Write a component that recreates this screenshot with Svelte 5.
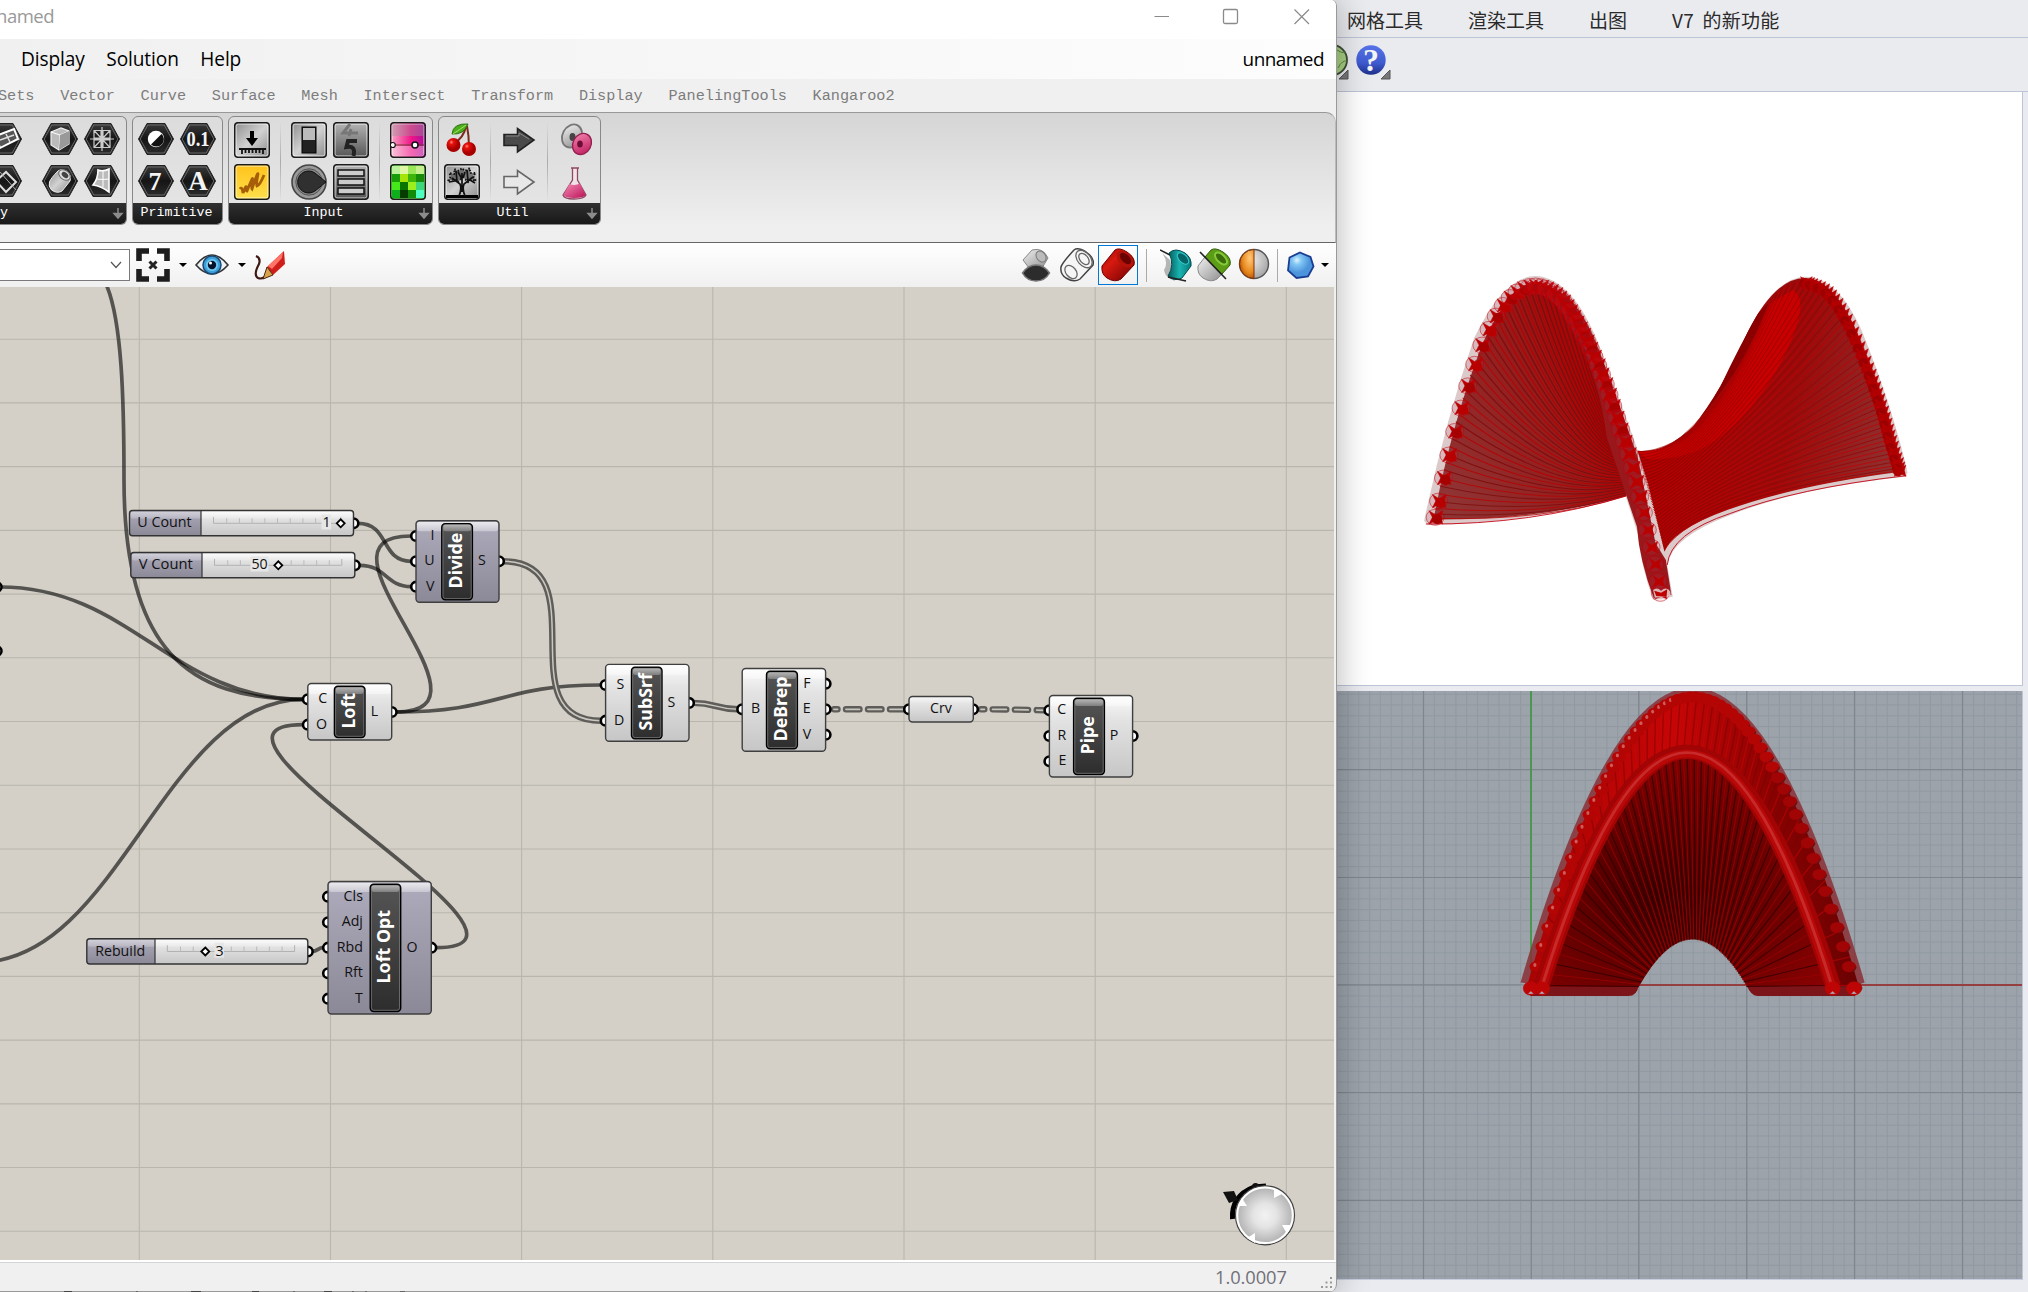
<script>
  const tabs = ['Sets', 'Vector', 'Curve', 'Surface', 'Mesh', 'Intersect', 'Transform', 'Display', 'PanelingTools', 'Kangaroo2'];
  // The first group is cut by the window edge: only its last columns show.
  const groups = [
    { label: 'y', arrow: true, cls: 'geometry', sets: [[['plane'], ['field']], [['box', 'mesh'], ['brep', 'surface']]] },
    { label: 'Primitive', arrow: false, cls: 'primitive', sets: [[['bool', 'num'], ['int', 'text']]] },
    { label: 'Input', arrow: true, cls: 'input', sets: [[['import'], ['panel']], [['toggle', 'digits'], ['knob', 'list']], [['gradient'], ['swatch']]] },
    { label: 'Util', arrow: true, cls: 'util', sets: [[['cherry'], ['tree']], [['arrowD'], ['arrowL']], [['discs'], ['flask']]] }
  ];

  const vLines = [139.3, 330.5, 521.6, 712.8, 904, 1095.2, 1286.3];
  const hLines = Array.from({ length: 15 }, (_, i) => 339.2 + i * 63.72);

  const sliders = [
    { name: 'U Count', x: 129.5, y: 510.5, w: 224, split: 201, tx: 137.3, tw: 54.4, by: 526.7, track: 213.5, knob: 340.7, val: '1', vx: 322.5 },
    { name: 'V Count', x: 130.8, y: 552.5, w: 224, split: 202, tx: 138.7, tw: 54, by: 569, track: 214.5, knob: 278.3, val: '50', vx: 251.5 },
    { name: 'Rebuild', x: 86.8, y: 938.7, w: 221, split: 155, tx: 95.2, tw: 50, by: 955.5, track: 167.3, knob: 205.3, val: '3', vx: 215.5 }
  ];
  const nodes = [
    { name: 'Divide', x: 416, y: 520.8, r: 499, b: 602.3, bx: 441.8, br: 472.4, mauve: true, ins: [['I', 536], ['U', 561.3], ['V', 586.7]], outs: [['S', 561.3, 482]] },
    { name: 'Loft', x: 307.8, y: 683.5, r: 391.7, b: 740, bx: 334.4, br: 365, ins: [['C', 699.3], ['O', 724.7]], outs: [['L', 712, 374.5]] },
    { name: 'SubSrf', x: 605.6, y: 664.4, r: 689, b: 741.3, bx: 631.5, br: 662, ins: [['S', 685], ['D', 720.7]], outs: [['S', 702.9, 671.4]] },
    { name: 'DeBrep', x: 742.2, y: 668.5, r: 825.6, b: 751.3, bx: 766.5, br: 797.4, ins: [['B', 709.3]], outs: [['F', 683.7, 806.8], ['E', 709.3, 806.8], ['V', 734.7, 807]] },
    { name: 'Pipe', x: 1049.4, y: 695.5, r: 1132.6, b: 777, bx: 1073.6, br: 1104.4, ins: [['C', 710.3], ['R', 736], ['E', 761.3]], outs: [['P', 736, 1114]] },
    { name: 'Loft Opt', x: 328, y: 881.5, r: 431.3, b: 1014, bx: 370.2, br: 400.7, mauve: true, ins: [['Cls', 896.7], ['Adj', 922.3], ['Rbd', 947.7], ['Rft', 973.3], ['T', 998.7]], outs: [['O', 947.7, 412]] }
  ];
  const wires = [
    'M106 284C122 320 124 400 124 480C124 650 188 699.3 303 699.3',
    'M0 587C130 587 173 699.3 303 699.3',
    'M-20 962C118 962 165 699.3 303 699.3',
    'M358 523.3C390 523.3 380 561.3 411 561.3',
    'M360 565.3C386 565.3 386 586.7 411 586.7',
    'M396 712C510 712 298 536 411 536',
    'M396 712C500 712 500 685 601 685',
    'M436 947.7C581 947.7 158 724.7 303 724.7',
    'M312 951.3C318 951.3 318 947.7 323 947.7'
  ];
  const doubles = ['M503 561.3C600 561.3 505 720.7 601 720.7', 'M693 702.9C716 702.9 716 709.3 738 709.3'];

  const lerp = (a, b, t) => a + (b - a) * t;
  function along(pts, t) {
    const n = pts.length - 1;
    const s = Math.min(n - 1, Math.floor(t * n));
    const f = t * n - s;
    const p0 = pts[Math.max(0, s - 1)], p1 = pts[s], p2 = pts[s + 1], p3 = pts[Math.min(n, s + 2)];
    return [0, 1].map((k) => 0.5 * (2 * p1[k] + (p2[k] - p0[k]) * f + (2 * p0[k] - 5 * p1[k] + 4 * p2[k] - p3[k]) * f * f + (3 * p1[k] - p0[k] - 3 * p2[k] + p3[k]) * f ** 3));
  }
  const edgeLeft = [[102, 802], [136, 640], [184, 450], [244, 270], [313, 150], [390, 108], [465, 145], [530, 250], [588, 380], [633, 515], [672, 640], [703, 770], [733, 910], [756, 1030]];
  const edgeRight = [[1055, 190], [1110, 115], [1180, 97], [1243, 128], [1300, 215], [1355, 345], [1395, 460], [1425, 570], [1452, 662]];
  const leftRim = [[500, 160], [440, 125], [380, 115], [310, 160], [240, 280], [180, 450], [132, 640], [98, 805]];
  const leftFan = Array.from({ length: 56 }, (_, i) => {
    const t = i / 55;
    const [x, y] = along(leftRim, t);
    return { t, d: `M${x} ${y}Q${lerp(560, 420, t)} ${lerp(430, 815, t)} ${lerp(625, 657, t)} ${lerp(560, 738, t)}` };
  });
  const rightFan = Array.from({ length: 64 }, (_, i) => {
    const t = i / 63;
    const [x, y] = along(edgeRight, t);
    return { t, d: `M${x} ${y}Q${lerp(900, 860, t)} ${lerp(600, 745, t)} ${lerp(690, 768, t)} ${lerp(605, 900, t)}` };
  });
  // Pipe ends sit closer together at the crown than at the feet.
  const leftBeads = Array.from({ length: 50 }, (_, i) => {
    const s = i / 49;
    return along(edgeLeft, Math.min(1, s + 0.07 * Math.sin(2 * Math.PI * s)));
  });
  const rightBeads = Array.from({ length: 38 }, (_, i) => along(edgeRight.slice(2), i / 37));

  const para = (c, h, top, base, u) => [c + h * u, top + (base - top) * u * u];
  const arch = Array.from({ length: 81 }, (_, i) => {
    const u = -1 + (2 * i) / 80;
    return { u, a: para(815, 372, 60, 795, u), b: para(802, 325, 215, 795, u), c: para(814, 121, 680, 798, u) };
  });
  const beads = Array.from({ length: 56 }, (_, i) => para(815, 364, 68, 800, -1 + (2 * i) / 55));
  const minorX = Array.from({ length: 64 }, (_, i) => 1337.25 + i * 10.785);
  const minorY = Array.from({ length: 55 }, (_, i) => 694.2 + i * 10.775);
  const star = (x, y, r) => `M${x - r} ${y - r}L${x} ${y - r * 0.35} ${x + r} ${y - r} ${x + r * 0.7} ${y} ${x + r} ${y + r} ${x} ${y + r * 0.5} ${x - r} ${y + r} ${x - r * 0.5} ${y}Z`;
</script>

{#snippet hex()}
  <path d="M9 1.5H27L35.5 17 27 32.5H9L.5 17Z" fill="url(#hexFill)" stroke="#222" />
  <path d="M9.8 3H26.2L33.8 17 26.2 31H9.8L2.2 17Z" fill="none" stroke="#777" stroke-width=".8" />
{/snippet}
{#snippet tile(fill)}
  <rect x=".7" y=".7" width="34.6" height="34.6" rx="3" {fill} stroke="#1c1c1c" stroke-width="1.5" />
  <rect x="2.2" y="2.2" width="31.6" height="31.6" rx="2" fill="none" stroke="#fff" stroke-opacity=".55" />
{/snippet}

{#snippet icon(name)}
  <svg class="ico" viewBox="0 0 36 36">
    {#if ['plane', 'field', 'box', 'mesh', 'brep', 'surface', 'bool', 'num', 'int', 'text'].includes(name)}{@render hex()}{/if}
    {#if name === 'plane'}
      <path d="M10 14L28 7 32 17 14 26Z" fill="#555" stroke="#fff" stroke-width="2" /><path d="M20 12L24 20M14 18L28 13" stroke="#ddd" stroke-width="1.5" />
    {:else if name === 'field'}
      <path d="M10 17L20 8 30 18 20 28Z" fill="none" stroke="#ddd" stroke-width="2" /><path d="M14 8L30 26" stroke="#aaa" />
    {:else if name === 'box'}
      <path d="M9 10L19 6 27 9V22L17 28 9 23Z" fill="#bbb" stroke="#eee" stroke-width="1.2" /><path d="M9 10L18 13 27 9M18 13L17 28" fill="none" stroke="#fff" /><path d="M18 13L27 9V22L17 28Z" fill="#999" />
    {:else if name === 'mesh'}
      <path d="M10 8.5H17V16H10ZM19 8.500H26V16H19ZM10 18H17V25.500H10ZM19 18H26V25.500H19ZM10 8.500L26 25.500M26 8.500L10 25.500M18 5V29M6 17H30" fill="none" stroke="#ccc" stroke-width="1.2" />
    {:else if name === 'brep'}
      <path d="M7.5 18Q9 14 16 7Q20 4 26 8Q30 12 28 17L20 27Q15 30 9.500 26Q6 22 7.500 18Z" fill="url(#metal)" stroke="#eee" /><ellipse cx="22.500" cy="11" rx="6.500" ry="4.500" transform="rotate(38 22.500 11)" fill="#ddd" stroke="#666" /><ellipse cx="23" cy="11" rx="3.800" ry="2.400" transform="rotate(38 23 11)" fill="#444" />
    {:else if name === 'surface'}
      <path d="M14 6Q19 8 25 5V28Q17 22 9 21Q14 15 14 6Z" fill="#bbb" stroke="#fff" stroke-width="1.6" /><path d="M19 7V23M12 15Q20 16 25 15" fill="none" stroke="#fff" />
    {:else if name === 'bool'}
      <circle cx="18" cy="17" r="8.2" fill="#fff" /><path d="M23.500 12A7.500 7 0 0 1 13 22.500Z" fill="#111" />
    {:else if name === 'num'}
      <text x="18" y="24" class="serif bold" font-size="20" textLength="23" lengthAdjust="spacingAndGlyphs">0.1</text>
    {:else if name === 'int'}
      <text x="17" y="26" class="serif bold" font-size="26">7</text>
    {:else if name === 'text'}
      <text x="18" y="26" class="serif bold" font-size="27">A</text>
    {:else if name === 'import'}
      {@render tile('url(#metal)')}<path d="M16 9H20V16H24L18 24 12 16H16Z" fill="#000" /><path d="M5 27H32M8 27V32M11.5 27V31M15 27V31M18.5 27V31M22 27V31M25.5 27V31M29 27V32" stroke="#111" stroke-width="1.8" />
    {:else if name === 'panel'}
      {@render tile('url(#gold)')}<path d="M6 25Q8 22 9 29Q12 21 12.500 23Q12 27 13 27Q19 12 18.500 15Q17 24 18 25Q24 7 24 10Q22 20 23 22Q26 21 30 11" fill="none" stroke="#a65f08" stroke-width="2.800" />
    {:else if name === 'toggle'}
      {@render tile('url(#metal)')}<rect x="11" y="5" width="14" height="26" fill="#222" stroke="#000" /><rect x="12" y="6" width="12" height="12" fill="#bbb" />
    {:else if name === 'digits'}
      {@render tile('url(#metalDark)')}<path d="M17 2L10 11H25M18 7L16 14" stroke="#777" stroke-width="3" fill="none" /><path d="M24 19H15L13.500 25Q23 23 20.500 34" stroke="#222" stroke-width="4" fill="none" />
    {:else if name === 'knob'}
      <circle cx="18" cy="18" r="17" fill="#999" stroke="#444" stroke-width="1.6" /><circle cx="18" cy="18" r="13.2" fill="#888" stroke="#555" /><path d="M18 7A11 11 0 1 0 24 27L35 18 24 9Q21 7 18 7Z" fill="#303030" stroke="#111" />
    {:else if name === 'list'}
      {@render tile('url(#metalDark)')}<path d="M5 6H31V12H5ZM5 15H31V21H5ZM5 24H31V30H5Z" fill="#ccc" stroke="#111" stroke-width="1.5" />
    {:else if name === 'gradient'}
      {@render tile('url(#pink)')}<path d="M2 2H34V14H2Z" fill="#999" opacity=".4" /><path d="M2 23H34" stroke="#733" stroke-width="1" /><path d="M2 24H34V31Q34 33 31 33H4Q2 33 2 31Z" fill="#fff" opacity=".35" /><circle cx="2.8" cy="23" r="2.5" fill="#fff" stroke="#111" stroke-width="1.2" /><circle cx="25" cy="23" r="3" fill="#fff" stroke="#111" stroke-width="1.5" />
    {:else if name === 'swatch'}
      {@render tile('#3bd31e')}
      <path d="M2 2H10V10H2Z" fill="#bdf29c" /><path d="M10 2H18V10H10Z" fill="#dff7a5" /><path d="M18 2H26V10H18Z" fill="#9ae85a" /><path d="M26 2H34V10H26Z" fill="#c4f08e" /><path d="M2 10H10V18H2Z" fill="#189c08" /><path d="M10 10H18V18H10Z" fill="#a5e408" /><path d="M18 10H26V18H18Z" fill="#3db50b" /><path d="M26 10H34V18H26Z" fill="#188c08" /><path d="M2 18H10V26H2Z" fill="#45e818" /><path d="M10 18H18V26H10Z" fill="#0a7500" /><path d="M18 18H26V26H18Z" fill="#9aef1c" /><path d="M26 18H34V26H26Z" fill="#3dd67b" /><path d="M2 26H10V34H2Z" fill="#0fae1c" /><path d="M10 26H18V34H10Z" fill="#063c00" /><path d="M18 26H26V34H18Z" fill="#128b08" /><path d="M26 26H34V34H26Z" fill="#4dffc0" />
    {:else if name === 'cherry'}
      <path d="M22 4Q20 16 9 22M23 4Q25 14 25 25" fill="none" stroke="#7d2b1d" stroke-width="2" /><path d="M8 12Q9 1 24 2Q20 13 8 12Z" fill="#4cae1c" stroke="#2c7010" /><path d="M9 12Q15 8 22 3" stroke="#a9e36a" fill="none" /><circle cx="9.5" cy="23" r="7" fill="url(#cherry)" /><circle cx="25" cy="27" r="7" fill="url(#cherry)" />
    {:else if name === 'tree'}
      {@render tile('url(#metal)')}<path d="M2 31H34V34H2Z" fill="#000" /><path d="M15 32Q18 25 16 20L8 14M21 32Q18 25 20 20L29 13M18 28V9M11 17L5 18M13 17L12 7M24 17L23 6M26 16L31 19M18 15L14 8M19 14L21 8" fill="none" stroke="#111" stroke-width="1.7" /><path d="M4 17L7 12 5 9 11 10 10 5 15 7 18 4 21 7 26 4 26 9 32 9 29 12 32 17 27 15 24 18 19 13 14 18 10 15Z" fill="#111" fill-opacity=".45" stroke="#111" stroke-dasharray="1.500 2" stroke-width="2" />
    {:else if name === 'arrowD'}
      <path d="M3 12.5H16.5V6.5L33 18 16.5 30V23.500H3Z" fill="#4a4a4a" stroke="#222" stroke-width="1.6" /><path d="M5 14H18V11L28 17" fill="none" stroke="#888" />
    {:else if name === 'arrowL'}
      <path d="M3 12.5H16.5V6.5L33 18 16.5 30V23.500H3Z" fill="#e8e8e8" stroke="#666" stroke-width="1.6" />
    {:else if name === 'discs'}
      <ellipse cx="14" cy="14" rx="9.500" ry="12" transform="rotate(28 14 14)" fill="url(#silver)" stroke="#777" stroke-width="1.800" /><ellipse cx="14.500" cy="15" rx="3" ry="4" fill="#444" /><ellipse cx="24" cy="22" rx="9" ry="11" transform="rotate(28 24 22)" fill="url(#rose)" stroke="#95204f" stroke-width="1.4" /><ellipse cx="22" cy="22" rx="2.800" ry="3.600" fill="#6b0d35" />
    {:else if name === 'flask'}
      <path d="M13 4H21M14.500 4V16L5 31Q6 35 16 35 26 35 28 31L19.500 16V4" fill="#f2e3e8" stroke="#8e4962" stroke-width="1.300" /><path d="M11.500 20Q17 22 22 19.500L27.500 31Q26 34 16 34 7 34 5.500 31Z" fill="url(#rose)" />
    {/if}
  </svg>
{/snippet}

<svg class="defs" width="0" height="0">
  <defs>
    <linearGradient id="hexFill" x1="0" y1="0" x2="0" y2="1"><stop offset="0" stop-color="#3a3a3a" /><stop offset=".5" stop-color="#151515" /><stop offset="1" stop-color="#2c2c2c" /></linearGradient>
    <linearGradient id="metal" x1="0" y1="0" x2="1" y2="1"><stop offset="0" stop-color="#8d8d8d" /><stop offset=".5" stop-color="#d2d2d2" /><stop offset="1" stop-color="#8a8a8a" /></linearGradient>
    <linearGradient id="silver" x1="0" y1="0" x2="1" y2="1"><stop offset="0" stop-color="#f2f2f2" /><stop offset="1" stop-color="#8f8f8f" /></linearGradient>
    <linearGradient id="metalDark" x1="0" y1="0" x2="0" y2="1"><stop offset="0" stop-color="#b5b5b5" /><stop offset="1" stop-color="#555" /></linearGradient>
    <linearGradient id="gold" x1="0" y1="0" x2="0" y2="1"><stop offset="0" stop-color="#ffc21a" /><stop offset="1" stop-color="#ffe04d" /></linearGradient>
    <linearGradient id="pink" x1="0" y1="0" x2="1" y2="0"><stop offset="0" stop-color="#f7a7c4" /><stop offset=".6" stop-color="#f01488" /><stop offset="1" stop-color="#a8109a" /></linearGradient>
    <radialGradient id="cherry" cx=".35" cy=".3"><stop offset="0" stop-color="#ff8d80" /><stop offset=".3" stop-color="#e8120e" /><stop offset="1" stop-color="#a80000" /></radialGradient>
    <linearGradient id="rose" x1="0" y1="0" x2="1" y2="1"><stop offset="0" stop-color="#f78bb5" /><stop offset="1" stop-color="#b91357" /></linearGradient>
    <linearGradient id="nodeGrey" x1="0" y1="0" x2="0" y2="1"><stop offset="0" stop-color="#fafafa" /><stop offset=".28" stop-color="#e4e4e4" /><stop offset="1" stop-color="#c6c6c6" /></linearGradient>
    <linearGradient id="nodeMauve" x1="0" y1="0" x2="0" y2="1"><stop offset="0" stop-color="#aeacbc" /><stop offset="1" stop-color="#8b8897" /></linearGradient>
    <linearGradient id="nodeDark" x1="0" y1="0" x2="0" y2="1"><stop offset="0" stop-color="#555" /><stop offset="1" stop-color="#2d2d2d" /></linearGradient>
    <linearGradient id="shine" x1="0" y1="0" x2="0" y2="1"><stop offset="0" stop-color="#fff" stop-opacity=".75" /><stop offset="1" stop-color="#fff" stop-opacity=".35" /></linearGradient>
    <radialGradient id="ball"><stop offset="0" stop-color="#f2f2f2" /><stop offset=".4" stop-color="#e4e4e4" /><stop offset="1" stop-color="#adadad" /></radialGradient>
    <linearGradient id="redCyl" x1="0" y1="0" x2="1" y2="1"><stop offset="0" stop-color="#8e0000" /><stop offset=".35" stop-color="#d81a10" /><stop offset="1" stop-color="#6c0000" /></linearGradient>
    <linearGradient id="tealCyl" x1="0" y1="0" x2="1" y2="0"><stop offset="0" stop-color="#06595a" /><stop offset=".5" stop-color="#19b4b1" /><stop offset="1" stop-color="#067a7c" /></linearGradient>
    <linearGradient id="helpBlue" x1="0" y1="0" x2="0" y2="1"><stop offset="0" stop-color="#5673ea" /><stop offset=".6" stop-color="#3f5bd0" /><stop offset="1" stop-color="#1c2f8a" /></linearGradient>
    <radialGradient id="gem" cx=".35" cy=".3"><stop offset="0" stop-color="#dff3ff" /><stop offset=".35" stop-color="#83c8f4" /><stop offset="1" stop-color="#4c94db" /></radialGradient>
    <radialGradient id="orb" cx=".7" cy=".3" r=".9"><stop offset="0" stop-color="#ffc87a" /><stop offset=".55" stop-color="#e8891c" /><stop offset="1" stop-color="#8e2f04" /></radialGradient>
    <radialGradient id="orbGrey" cx=".35" cy=".35" r=".7"><stop offset="0" stop-color="#f4f4f4" /><stop offset="1" stop-color="#a5a5a5" /></radialGradient>
    <linearGradient id="band" x1="0" y1="0" x2="1" y2="0"><stop offset="0" stop-color="#a80404" /><stop offset=".45" stop-color="#c60606" /><stop offset=".75" stop-color="#860202" /><stop offset="1" stop-color="#6a0202" /></linearGradient>
    <radialGradient id="inner" cx=".4" cy=".6" r=".7"><stop offset="0" stop-color="#3d0000" /><stop offset=".35" stop-color="#5c0000" /><stop offset="1" stop-color="#8a0202" /></radialGradient>
    <linearGradient id="fanL" x1="0" y1=".8" x2="1" y2=".2"><stop offset="0" stop-color="#8f3434" /><stop offset="1" stop-color="#9a0505" /></linearGradient>
    <linearGradient id="fanR" x1="0" y1=".3" x2="1" y2=".5"><stop offset="0" stop-color="#a80000" /><stop offset=".6" stop-color="#980c0c" /><stop offset="1" stop-color="#8f3030" /></linearGradient>
  </defs>
</svg>

<div class="screen">
  <main class="window">
    <header class="title">
      <span class="caption">named</span>
      <svg width="180" height="34" viewBox="0 0 180 34"><path d="M4.500 16.500H19M144.500 9.500L159 24M159 9.500L144.500 24" stroke="#8a8a8a" stroke-width="1.200" /><rect x="73.500" y="9.500" width="14" height="14" rx="1.500" fill="none" stroke="#8a8a8a" stroke-width="1.300" /></svg>
    </header>
    <nav class="menu"><span>Display</span><span>Solution</span><span>Help</span><span class="doc">unnamed</span></nav>
    <nav class="tabs">{#each tabs as t}<span>{t}</span>{/each}</nav>
    <section class="ribbon">
      {#each groups as g}
        <div class="group {g.cls}">
          <div class="sets">
            {#each g.sets as set, i}
              {#if i}<i class="rule"></i>{/if}
              <div class="set">{#each set as row}<div class="row">{#each row as n}{@render icon(n)}{/each}</div>{/each}</div>
            {/each}
          </div>
          <div class="label"><span>{g.label}</span>{#if g.arrow}<svg width="12" height="14" viewBox="0 0 12 14"><path d="M6 1V7M2 6.500L6 11 10 6.500Z" fill="#8c8c8c" stroke="#8c8c8c" stroke-width="1.500" /></svg>{/if}</div>
        </div>
      {/each}
    </section>
    <section class="toolbar">
      <div class="combo"><svg width="14" height="10" viewBox="0 0 14 10"><path d="M2 2L7 7.500 12 2" fill="none" stroke="#555" stroke-width="1.200" /></svg></div>
      <svg class="t1" width="34" height="34" viewBox="0 0 34 34"><path d="M3 13V3H13M21 3H31V13M31 21V31H21M13 31H3V21" fill="none" stroke="#1d1d1d" stroke-width="5.600" /><path d="M13.500 13.500L20.500 20.500M20.500 13.500L13.500 20.500" stroke="#222" stroke-width="3" /></svg>
      <i class="caret c1"></i>
      <svg class="t2" width="34" height="24" viewBox="0 0 34 24"><path d="M1 12Q17-8 33 12Q17 30 1 12Z" fill="#eef2f4" stroke="#333" stroke-width="1.600" /><circle cx="17" cy="12" r="9" fill="#3f9fd8" stroke="#174a77" stroke-width="1.500" /><circle cx="17" cy="12" r="6" fill="#6ecbf5" /><circle cx="17" cy="12" r="4.200" fill="#06122b" /><circle cx="15.500" cy="10" r="1.500" fill="#fff" /></svg>
      <i class="caret c2"></i>
      <svg class="t3" width="34" height="32" viewBox="0 0 34 32"><path d="M3 7Q8 9 6 15Q0 26 5 29Q10 31 15 25" fill="none" stroke="#3f1914" stroke-width="2.200" /><path d="M14 18L31 2 32 15 20 26Z" fill="#cf1f1a" /><path d="M15 17L30 3 29 9 19 20Z" fill="#ff7468" /><path d="M14 18L20 26 10 30Z" fill="#d9a44c" stroke="#4b2a10" /></svg>
      <div class="right">
        <svg width="30" height="34" viewBox="0 0 30 34"><path d="M2 12L11 2Q22-1 27 10L21 20H8Z" fill="url(#silver)" stroke="#888" /><ellipse cx="20" cy="8.500" rx="4.500" ry="6" transform="rotate(-35 20 8.500)" fill="#bbb" stroke="#777" /><path d="M1.500 25Q7 17 15 17T28.500 25Q24 33 15 33T1.500 25Z" fill="#2c2c2c" stroke="#777" stroke-width="1.500" /></svg>
        <svg class="wireCyl" width="34" height="34" viewBox="0 0 34 34"><path d="M1 19Q2 15 14 2Q18-1 26 4Q35 10 33 17L20 31Q14 35 6 30Q0 26 1 19Z" fill="#f6f6f6" stroke="#444" stroke-width="1.500" /><g fill="none" stroke="#666" stroke-width="1.300"><ellipse cx="24" cy="11" rx="6.500" ry="10" transform="rotate(-40 24 11)" /><ellipse cx="24" cy="11" rx="4" ry="6.500" transform="rotate(-40 24 11)" /><ellipse cx="11" cy="24" rx="5" ry="7.500" transform="rotate(-40 11 24)" /></g></svg>
        <div class="active"><svg width="34" height="34" viewBox="0 0 34 34"><path d="M1 18L14 2Q18-1 26 4Q35 10 33 17L20 31Q14 35 6 30Q0 26 1 18Z" fill="url(#redCyl)" stroke="#6d0000" /><ellipse cx="24" cy="11" rx="6.500" ry="10" transform="rotate(-45 24 11)" fill="#b5120a" /><ellipse cx="24.500" cy="10.500" rx="4" ry="7" transform="rotate(-45 24.500 10.500)" fill="#6a0300" /></svg></div>
        <i class="sep"></i>
        <svg class="teal" width="32" height="34" viewBox="0 0 32 34"><path d="M2 5Q9 14 4 22Q5 30 15 33L10 12Z" fill="#888" opacity=".6" /><path d="M9 5Q15-1 25 5Q32 10 31 18L22 30Q14 34 8 28Q15 17 9 5Z" fill="url(#tealCyl)" stroke="#044b4d" /><ellipse cx="23" cy="10.500" rx="4" ry="7" transform="rotate(-45 23 10.500)" fill="#066468" stroke="#35c6c6" /><path d="M0 2L10 7M8 29L26 33" stroke="#222" stroke-width="1.500" /></svg>
        <svg class="green" width="34" height="34" viewBox="0 0 34 34"><path d="M1 18L8 9 25 26 20 31Q14 35 6 30Q0 26 1 18Z" fill="url(#silver)" stroke="#888" /><path d="M8 9L14 2Q18-1 26 4Q35 10 33 17L25 26Z" fill="#5c9c16" stroke="#2f5d08" /><ellipse cx="24" cy="10.500" rx="4" ry="7.500" transform="rotate(-45 24 10.500)" fill="#3c6b0c" stroke="#84c93a" stroke-width="2" /><path d="M3 4L29 31" stroke="#222" stroke-width="1.600" /></svg>
        <svg class="sphere" width="32" height="34" viewBox="0 0 32 34"><circle cx="16" cy="16" r="14.500" fill="url(#orbGrey)" stroke="#555" stroke-width="1.400" /><path d="M16 1.500A14.500 14.500 0 0 0 16 30.500Z" fill="url(#orb)" stroke="#813206" /></svg>
        <i class="sep last"></i>
        <svg class="gem" width="29" height="29" viewBox="0 0 29 29"><path d="M14 1.500L24.500 6 27.500 15.500 22 25.500 10.500 27 2 19.500 3.500 6.500Z" fill="url(#gem)" stroke="#1b3d91" stroke-width="1.800" /></svg>
        <i class="caret c3"></i>
      </div>
    </section>

    <svg class="canvas" width="1334" height="973" viewBox="0 287 1334 973">
      <rect x="0" y="287" width="1334" height="973" fill="#d4d0c8" />
      <g stroke="#b9b6ae" stroke-width="1.100">
        {#each vLines as x}<path d="M{x} 287V1260" />{/each}
        {#each hLines as y}<path d="M0 {y}H1334" />{/each}
      </g>
      <g fill="none" stroke="#000" stroke-opacity=".6" stroke-width="3.700">{#each wires as d}<path {d} />{/each}</g>
      {#each doubles as d}<path {d} fill="none" stroke="#5f5d59" stroke-width="6.400" /><path {d} fill="none" stroke="#cbc8c0" stroke-width="1.500" />{/each}
      <g fill="none" stroke-linecap="round">
        <path d="M834 709.300H905M981 709.300Q1010 709.300 1045 710.300" stroke="#5f5d59" stroke-width="6.400" stroke-dasharray="13.500 8.500" stroke-dashoffset="10" />
        <path d="M834 709.300H905M981 709.300Q1010 709.300 1045 710.300" stroke="#c8c5bd" stroke-width="1.800" stroke-dasharray="13.500 8.500" stroke-dashoffset="10" />
      </g>
      <g fill="#fff" stroke="#000" stroke-width="2.600">
        <circle cx="-3" cy="587" r="4.500" /><circle cx="-3" cy="651" r="4.500" />
        {#each sliders as s}<circle cx={s.x + s.w} cy={s.y + 12.8} r="4.800" />{/each}
        {#each nodes as n}
          {#each n.ins as p}<circle cx={n.x} cy={p[1]} r="4.800" />{/each}
          {#each n.outs as p}<circle cx={n.r} cy={p[1]} r="4.800" />{/each}
        {/each}
        <circle cx="909" cy="709.300" r="4.800" /><circle cx="973" cy="709.300" r="4.800" />
      </g>

      {#each sliders as s}
        <rect x={s.x} y={s.y} width={s.w} height="25.300" rx="3" fill="url(#nodeGrey)" />
        <path d="M{s.split} {s.y}H{s.x + 3}Q{s.x} {s.y} {s.x} {s.y + 3}V{s.y + 22.3}Q{s.x} {s.y + 25.3} {s.x + 3} {s.y + 25.3}H{s.split}Z" fill="url(#nodeMauve)" />
        <rect x={s.x + 1} y={s.y + 1} width={s.w - 2} height="7" rx="2" fill="url(#shine)" opacity=".6" />
        <rect x={s.x} y={s.y} width={s.w} height="25.300" rx="3" fill="none" stroke="#333" stroke-width="1.400" />
        <path d="M{s.split} {s.y}V{s.y + 25.3}" stroke="#333" stroke-width="1.200" />
        <path d="M{s.track} {s.y + 6.5}V{s.y + 12.8}H{s.track + 127.3}V{s.y + 6.500}" fill="none" stroke="#b2b2b2" />
        <path d="M{s.track + 12.7} {s.y + 10.300}H{s.track + 127}" fill="none" stroke="#bbb" stroke-width="5" stroke-dasharray="1 11.700" />
        <rect x={s.vx - 1} y={s.y + 4} width={s.val.length * 8.5 + 1} height="15" fill="#e6e6e6" />
        <text x={s.tx} y={s.by} textLength={s.tw} lengthAdjust="spacingAndGlyphs">{s.name}</text>
        <text x={s.vx} y={s.by}>{s.val}</text>
        <path d="M{s.knob - 4} {s.y + 12.8}l4-4 4 4-4 4z" fill="#fff" stroke="#000" stroke-width="1.800" />
      {/each}

      {#each nodes as n}
        <rect x={n.x} y={n.y} width={n.r - n.x} height={n.b - n.y} rx="3.500" fill={n.mauve ? 'url(#nodeMauve)' : 'url(#nodeGrey)'} />
        <rect x={n.x + 1} y={n.y + 1} width={n.r - n.x - 2} height="9.500" rx="2.500" fill="url(#shine)" />
        <rect x={n.x} y={n.y} width={n.r - n.x} height={n.b - n.y} rx="3.500" fill="none" stroke="#3f3f3f" stroke-width="1.400" />
        <rect x={n.bx} y={n.y + 2.800} width={n.br - n.bx} height={n.b - n.y - 5.300} rx="3.500" fill="url(#nodeDark)" stroke="#000" stroke-width="1.400" />
        <rect x={n.bx + 1.200} y={n.y + 4} width={n.br - n.bx - 2.400} height={n.b - n.y - 7.700} rx="2.500" fill="none" stroke="#777" stroke-width=".8" />
        <rect x={n.bx + 1.500} y={n.y + 4} width={n.br - n.bx - 3} height="6.500" rx="2" fill="url(#shine)" opacity=".75" />
        <text class="name" transform="translate({(n.bx + n.br) / 2 + 5} {(n.y + n.b) / 2 - 1}) rotate(-90)">{n.name}</text>
        {#each n.ins as p}<text class={n.name === 'DeBrep' ? 'mid' : 'end'} x={n.name === 'DeBrep' ? 755.7 : n.bx - 7.3} y={p[1] + 3.8}>{p[0]}</text>{/each}
        {#each n.outs as p}<text class="mid" x={p[2]} y={p[1] + 3.8}>{p[0]}</text>{/each}
      {/each}

      <rect x="909" y="696.500" width="64.300" height="25.500" rx="3.500" fill="url(#nodeGrey)" stroke="#3f3f3f" stroke-width="1.400" />
      <text class="mid" x="941" y="713.300">Crv</text>

      <g>
        <path d="M1232.500 1219Q1231 1196 1254 1187L1266 1186" fill="none" stroke="#000" stroke-width="5" /><path d="M1223 1192L1234 1191 1238 1200 1229 1203Z" /><circle cx="1255.500" cy="1186.500" r="3.500" />
        <circle cx="1265" cy="1215.300" r="29.500" fill="url(#ball)" stroke="#444" stroke-width="1.200" />
        <circle cx="1265" cy="1215.300" r="27.800" fill="none" stroke="#fff" stroke-width="2" />
        <path d="M1274 1188L1282 1194 1274 1198ZM1242 1198L1247 1206 1238 1206ZM1282 1225H1291L1287 1234ZM1255 1233V1243L1247 1238Z" fill="#fff" />
      </g>
    </svg>
    <footer class="status"><span>1.0.0007</span><svg width="14" height="14" viewBox="0 0 14 14"><path d="M10 1h2v2h-2zM5.500 5.500h2v2h-2zM10 5.500h2v2h-2zM1 10h2v2H1zM5.500 10h2v2h-2zM10 10h2v2h-2z" fill="#999" /></svg></footer>
    <svg width="1336" height="1" viewBox="0 0 1336 1"><path d="M0 .5H1336" stroke="#999" /><path d="M64 .5H72M191 .5H201M252 .5H259M324 .5H332" stroke="#444" /><path d="M136 .5H138M293 .5H295M352 .5H354M365 .5H367M400 .5H405" stroke="#666" /></svg>
  </main>

  <aside class="host">
    <nav class="hostMenu"><span>网格工具</span><span>渲染工具</span><span>出图</span><span class="v7">V7 的新功能</span></nav>
    <div class="hostBar">
      <svg width="60" height="48" viewBox="1337 38 60 48">
        <circle cx="1332" cy="60" r="15" fill="#a7cf83" stroke="#3c4a35" stroke-width="1.800" /><path d="M1337 50Q1342 54 1346 52M1338 68Q1342 60 1347 61" stroke="#5d8347" fill="none" />
        <path d="M1348 70V79H1339Z" fill="#777" stroke="#555" />
        <circle cx="1371" cy="60" r="14.700" fill="url(#helpBlue)" />
        <path d="M1390 70V79H1381Z" fill="#777" stroke="#555" />
        <text class="serif bold" x="1371" y="71" font-size="32">?</text>
      </svg>
    </div>
    <svg class="persp" width="685" height="593" viewBox="1337 92 685 593">
      <g transform="translate(1400 250) scale(.34439 .33333)">
        <path d="M70 812Q130 520 215 265Q300 80 392 78Q500 80 580 290Q650 480 690 600Q760 625 850 530Q930 430 1010 245Q1090 80 1178 80Q1270 80 1340 240Q1430 470 1474 668L1466 680Q1150 715 960 795Q790 860 776 945L792 1040 735 1050Q700 950 690 850L655 738Q380 820 80 825Z" fill="#dccaca" />
        <path d="M98 805Q150 520 240 280Q320 105 390 100Q500 110 575 320L690 640 657 738Q400 812 98 808Z" fill="url(#fanL)" />
        <path d="M690 602Q770 610 850 530Q930 430 1010 245Q1090 82 1178 84Q1260 86 1330 255L1455 665Q1150 705 950 780Q790 840 768 905L720 700Z" fill="url(#fanR)" />
        <path d="M690 605Q790 610 870 530Q960 420 1075 160L1140 120Q1200 150 1100 350Q1000 530 870 600Q800 630 720 628Z" fill="#cc0000" />
        <g fill="none">
          {#each leftFan as l, i}<path d={l.d} stroke={i % 2 ? '#b80000' : '#7d0a0a'} stroke-width={lerp(5, 2.6, l.t)} stroke-opacity={lerp(0.8, 0.85, l.t)} />{/each}
          {#each rightFan as l, i}<path d={l.d} stroke={i % 2 ? '#c20000' : '#940404'} stroke-width={lerp(3.2, 2.600, l.t)} stroke-opacity={lerp(0.6, 0.85, Math.min(1, l.t * 2))} />{/each}
        </g>
        <path d="M760 595Q850 560 930 410Q990 280 1040 190L1070 160Q1000 350 890 480Q820 570 760 595Z" fill="#8a0000" />
        <path d="M75 822Q380 825 655 738M776 945Q785 850 960 790Q1150 715 1470 677" fill="none" stroke="#c20010" stroke-width="2.600" />
        <path d="M470 120Q540 190 585 320Q640 470 690 620L742 880 772 930 788 1035 737 1045Q695 930 688 830L655 730 600 560Q580 400 510 220Z" fill="#98181c" />
        <g stroke="#bd0008" stroke-width="1.500">
          {#each leftBeads as p, i}<ellipse cx={p[0]} cy={p[1]} rx="26" ry="24" fill="#b46" fill-opacity=".12" /><path d={star(p[0] + 2, p[1], i > 43 ? 17 : 20)} fill="#bb0000" />{#if i < 40}<circle cx={p[0] + 6} cy={p[1] + 6} r="15" fill={i % 2 ? '#b80000' : '#a60000'} stroke="none" />{/if}{/each}
          {#each rightBeads as p, i}<path d={star(p[0], p[1], 17)} fill="#b40000" /><circle cx={p[0] - 6} cy={p[1] + 3} r="14" fill={i % 2 ? '#ae0000' : '#9c0000'} stroke="none" />{/each}
        </g>
        <path d="M735 1020Q745 1010 758 1022 775 1008 785 1025L786 1038 740 1043Z" fill="#e8dede" opacity=".8" /><path d="M738 1022L758 1028 776 1018 774 1040 744 1038Z" fill="#c00000" />
      </g>
    </svg>
    <svg class="front" width="685" height="588" viewBox="1337 691 685 588">
      <rect x="1337" y="691" width="685" height="588" fill="#9ca3ab" />
      <g stroke="#9299a1">{#each minorX as x}<path d="M{x} 691V1279" />{/each}{#each minorY as y}<path d="M1337 {y}H2022" />{/each}</g>
      <g stroke="#81868e" stroke-width="1.200">{#each [1423.5, 1531.3, 1638.7, 1746.7, 1854.5, 1962.5] as x}<path d="M{x} 691V1279" />{/each}{#each [769.6, 877.5, 984.8, 1092.5, 1200.4] as y}<path d="M1337 {y}H2022" />{/each}</g>
      <path d="M1531 691V985" stroke="#43994a" stroke-width="1.800" /><path d="M1531 985H2022" stroke="#953f42" stroke-width="1.800" />
      <g transform="translate(1330 670) scale(.44516 .39669)">
        <path d="M428 788Q815-700 1201 788L1170 800L1100 600 815 200 520 600 475 795Z" fill="#8a3036" opacity=".85" />
        <path d="M443 795Q815-675 1187 795L1187 815 1130 800Q802-384 475 800L450 815Z" fill="url(#band)" />
        <path d="M475 800Q802-384 1130 800H938Q814 556 693 800Z" fill="url(#inner)" />
        <path d="M450 797Q580 800 693 797Q690 821 670 822H450ZM937 797H1180V822H960Q945 820 937 797Z" fill="#7c1519" />
        <g fill="none">
          {#each arch as l, i}
            <path d="M{l.a[0]} {l.a[1]}L{l.b[0]} {l.b[1]}" stroke={i % 2 ? '#800000' : '#c80606'} stroke-width="3" stroke-opacity=".55" />
            <path d="M{l.b[0]} {l.b[1]}L{l.c[0]} {l.c[1]}" stroke={i % 2 ? '#9a0303' : '#2c0000'} stroke-width="2.400" stroke-opacity=".8" />
          {/each}
        </g>
        {#each beads as p}
          <ellipse cx={p[0]} cy={p[1]} rx="16" ry="14" fill={p[0] > 1000 ? '#a00404' : '#b40505'} />
          {#if p[0] < 780}<ellipse cx={p[0] - 4} cy={p[1] - 4} rx="3.500" ry="5" fill="#dc8c8c" opacity=".65" />{/if}
          {#if p[0] > 900}<path d="M{p[0] + 4} {p[1] + 14}q10-4 12-14" fill="none" stroke="#6d1014" stroke-width="3" />{/if}
        {/each}
        <path d="M475 797Q802-384 1130 797" fill="none" stroke="#a00404" stroke-width="36" /><path d="M477 797Q802-376 1127 797" fill="none" stroke="#b80808" stroke-width="20" />
        <path d="M477 795Q802-378 1127 795" fill="none" stroke="#c83030" stroke-width="7" opacity=".85" />
        <g fill="#bd0505" stroke="#c40a0a">{#each [451, 476, 1129, 1177] as x}<circle cx={x} cy="803" r="17" /><path d="M{x - 7} 817L{x} 809L{x + 7} 817Z" fill="#aab" />{/each}</g>
      </g>
    </svg>
  </aside>
</div>

<style>
  :global(body) { margin: 0; overflow: hidden; background: #eaebef; }
  .screen { display: grid; grid-template-columns: 1337px 691px; width: 2028px; height: 1292px; overflow: hidden; font-family: "Open Sans", "Noto Sans", sans-serif; background: #e8eaf0; }
  .defs { position: absolute; }
  svg { display: block; flex: none; }
  .window { z-index: 1; box-sizing: border-box; height: 1292px; width: 1337px; border-right: 1.500px solid #999; border-radius: 0 6px 8px 0; background: #f0f0f0; box-shadow: 0 0 34px rgba(0, 0, 0, .3); display: flex; flex-direction: column; overflow: hidden; }
  .title { height: 39px; background: #fff; display: flex; justify-content: space-between; color: #999; font-size: 18.500px; letter-spacing: -.5px; line-height: 32px; }
  .caption { width: 54px; display: flex; justify-content: flex-end; white-space: nowrap; }
  .title svg { margin-right: 6px; }
  .menu { height: 40px; display: flex; align-items: center; gap: 21.500px; padding: 0 12px 0 21px; font-size: 19.100px; line-height: 40px; background: linear-gradient(90deg, #f0f0f0, #fdfdfd); letter-spacing: -.1px; color: #000; }
  .doc { margin-left: auto; font-size: 18.900px; letter-spacing: -.5px; }
  .tabs { height: 33px; display: flex; gap: 25.700px; margin-left: -2px; font: 15.190px/35px "Liberation Mono", monospace; color: #7d7d7d; }
  .ribbon { height: 131px; box-sizing: border-box; border-top: 1.500px solid #999; border-right: 1px solid #bbb; border-bottom: 1.500px solid #666; border-radius: 0 10px 0 0; background: linear-gradient(#d5d5d5, #efefef 88%); display: flex; gap: 5.600px; padding-top: 3px; }
  .group { height: 109px; box-sizing: border-box; border: 1.300px solid #888; border-radius: 6px; overflow: hidden; background: linear-gradient(#dcdcdc, #e6e6e6); display: flex; flex-direction: column; }
  .geometry { width: 126.700px; border-left: 0; border-radius: 0 6px 6px 0; }
  .primitive { width: 90.400px; }
  .input { width: 204.400px; }
  .util { width: 162.400px; }
  .sets { height: 86px; box-sizing: border-box; display: flex; padding: 5px 5px 0 4.500px; gap: 10px; }
  .geometry .sets { justify-content: flex-end; padding-right: 6px; }
  .set { display: flex; flex-direction: column; gap: 6.300px; }
  .row { display: flex; gap: 6px; }
  .rule { width: 1px; height: 80px; background: linear-gradient(transparent, #aaa, transparent); }
  .ico { width: 36px; height: 36px; }
  .serif { font-family: "Liberation Serif", serif; fill: #f4f4f4; text-anchor: middle; }
  .bold { font-weight: 700; }
  .label { flex: 1; background: linear-gradient(#303030, #181818); color: #fff; display: flex; align-items: center; font: 13.330px/16px "Liberation Mono", monospace; padding-right: 2px; }
  .label span { flex: 1; text-align: center; padding-bottom: 1px; }
  .geometry .label span { text-align: left; }
  .toolbar { height: 44px; background: linear-gradient(#fff, #f0f0f0); display: flex; align-items: center; }
  .combo { box-sizing: border-box; width: 129.500px; height: 32px; border: 1.300px solid #7a7a7a; border-left: 0; background: #fff; display: flex; align-items: center; justify-content: flex-end; padding-right: 6px; }
  .t1 { margin-left: 6.500px; }
  .caret { width: 0; height: 0; border: 4px solid transparent; border-top: 4.500px solid #000; border-bottom: 0; }
  .c1 { margin: 0 8.500px 0 8.500px; }
  .c2 { margin: 0 7.500px 0 8.500px; }
  .right { margin-left: auto; display: flex; align-items: center; padding-right: 7.500px; }
  .wireCyl { margin-left: 9px; margin-right: 4px; }
  .active { width: 38px; height: 38px; border: 1.300px solid #0078d7; display: grid; place-items: center; }
  .sep { width: 1px; height: 33px; background: #aaa; margin: 0 8px; }
  .last { margin: 0 7.500px 0 7px; }
  .teal { margin-left: 5px; margin-right: 5px; }
  .sphere { margin-left: 7px; }
  .gem { margin-right: 6px; }
  .canvas { font-family: "Open Sans", "Noto Sans", sans-serif; font-size: 14.200px; fill: #111; }
  .canvas .end { text-anchor: end; }
  .canvas .mid { text-anchor: middle; }
  .canvas .name { font-size: 17.800px; font-weight: 700; fill: #fff; text-anchor: middle; font-family: "Noto Sans", sans-serif; }
  .status { flex: 1; border-top: 2px solid #fff; display: flex; align-items: center; justify-content: flex-end; gap: 32px; padding: 0 2px 0 0; color: #70707a; font-size: 18.300px; line-height: 26px; box-shadow: inset 0 1px 0 #d5d5d5; }
  .status svg { align-self: flex-end; margin-bottom: 1px; }
  .status span { width: 73px; letter-spacing: -.05px; }
  .host { display: flex; flex-direction: column; background: #e9ebf0; }
  .hostMenu { height: 37px; display: flex; gap: 45px; padding-left: 10px; border-bottom: 1.300px solid #bcc4d8; font: 19px/39px "Noto Sans CJK SC", sans-serif; color: #2a2a2a; background: #eaebef; }
  .v7 { word-spacing: 4px; letter-spacing: .25px; }
  .hostBar { height: 53px; background: #eaebef; border-bottom: 1px solid #bcc4d8; }
  .persp { background: #fff; border-right: 1px solid #bcc4d8; border-bottom: 1px solid #bcc4d8; }
  .front { margin-top: 5px; border-right: 1px solid #bcc4d8; border-bottom: 1px solid #c8cee0; }
</style>
